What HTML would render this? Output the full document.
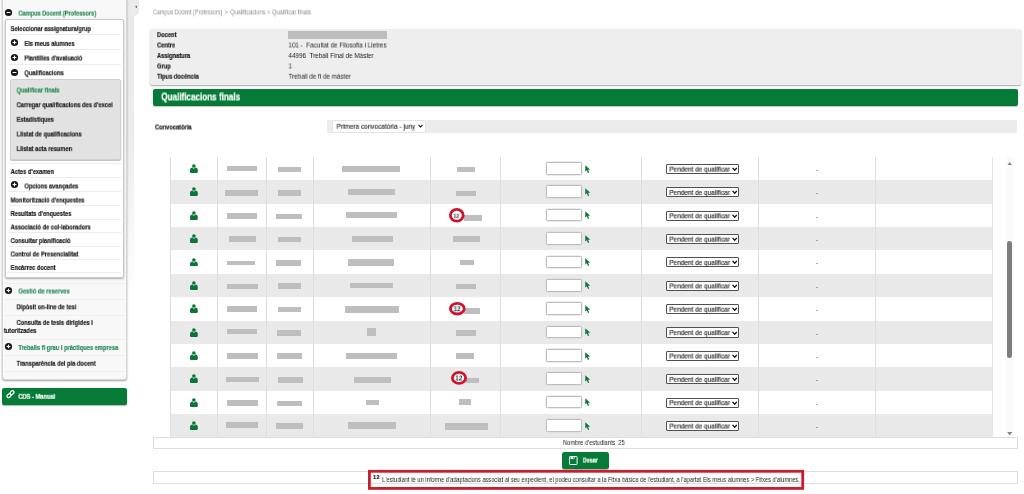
<!DOCTYPE html>
<html><head><meta charset="utf-8"><title>Qualificacions finals</title>
<style>
*{box-sizing:border-box;margin:0;padding:0}
html,body{width:1024px;height:494px;overflow:hidden;background:#fff}
body{font-family:"Liberation Sans",sans-serif;position:relative;color:#222}
.a{position:absolute}
.t{position:absolute;white-space:nowrap;transform-origin:0 50%;line-height:12px;height:12px;will-change:transform}
</style></head><body>
<div class="a" style="left:127px;top:0px;width:7.00px;height:300.00px;background:linear-gradient(to bottom,#e9e9e9 0,#ececec 45%,#fff 100%)"></div>
<div class="a" style="left:127px;top:-3px;width:12.30px;height:18.50px;background:#ebebeb;border-radius:0 0 5px 0"></div>
<svg class="a" style="left:134.5px;top:4.7px" width="2.6" height="3.6" viewBox="0 0 3 4.4"><path d="M3 0 L0 2.2 L3 4.4Z" fill="#5c5c5c"/></svg>
<div class="a" style="left:1.5px;top:-4px;width:125.50px;height:384.00px;background:#f8f8f8;border:1px solid #d6d6d6;border-radius:3px;box-shadow:0 1px 2px rgba(0,0,0,.38)"></div>
<div class="a" style="left:5.2px;top:19px;width:119.00px;height:258.80px;background:#fff;border:1px solid #c9c9c9;border-radius:2px;box-shadow:0 1px 2px rgba(0,0,0,.3)"></div>
<svg class="a" style="left:4px;top:8px" width="9" height="9" viewBox="0 0 9 9"><circle cx="4.5" cy="4.5" r="3.6" fill="#161616"/><rect x="2.6" y="3.95" width="3.8" height="1.1" fill="#fff"/></svg>
<div class="t" style="left:18px;top:7px;font-size:7px;font-weight:bold;color:#2b8c58;transform:translate(0.40px,0.60px) scaleX(0.805);-webkit-text-stroke:.22px currentColor;">Campus Docent (Professors)</div>
<div class="t" style="left:10px;top:23px;font-size:7px;font-weight:bold;color:#222;transform:translate(0.60px,0.10px) scaleX(0.82);-webkit-text-stroke:.22px currentColor;">Seleccionar assignatura/grup</div>
<svg class="a" style="left:10px;top:38px" width="9" height="9" viewBox="0 0 9 9"><circle cx="4.5" cy="4.5" r="3.6" fill="#161616"/><rect x="2.6" y="3.95" width="3.8" height="1.1" fill="#fff"/><rect x="3.95" y="2.6" width="1.1" height="3.8" fill="#fff"/></svg>
<div class="t" style="left:24px;top:37px;font-size:7px;font-weight:bold;color:#222;transform:translate(0.40px,0.90px) scaleX(0.82);-webkit-text-stroke:.22px currentColor;">Els meus alumnes</div>
<svg class="a" style="left:10px;top:53px" width="9" height="9" viewBox="0 0 9 9"><circle cx="4.5" cy="4.5" r="3.6" fill="#161616"/><rect x="2.6" y="3.95" width="3.8" height="1.1" fill="#fff"/><rect x="3.95" y="2.6" width="1.1" height="3.8" fill="#fff"/></svg>
<div class="t" style="left:24px;top:52px;font-size:7px;font-weight:bold;color:#222;transform:translate(0.40px,0.50px) scaleX(0.82);-webkit-text-stroke:.22px currentColor;">Plantilles d&#39;avaluació</div>
<svg class="a" style="left:10px;top:68px" width="9" height="9" viewBox="0 0 9 9"><circle cx="4.5" cy="4.5" r="3.6" fill="#161616"/><rect x="2.6" y="3.95" width="3.8" height="1.1" fill="#fff"/></svg>
<div class="t" style="left:24px;top:67px;font-size:7px;font-weight:bold;color:#222;transform:translate(0.40px,0.20px) scaleX(0.82);-webkit-text-stroke:.22px currentColor;">Qualificacions</div>
<div class="a" style="left:9px;top:33.9px;width:112.00px;height:1.00px;background:#ececec"></div>
<div class="a" style="left:9px;top:48.8px;width:112.00px;height:1.00px;background:#ececec"></div>
<div class="a" style="left:9px;top:63.5px;width:112.00px;height:1.00px;background:#ececec"></div>
<div class="a" style="left:10px;top:79px;width:110.50px;height:80.50px;background:#e2e2e2;border:1px solid #cfcfcf;border-radius:2px;box-shadow:0 1px 1px rgba(0,0,0,.25)"></div>
<div class="t" style="left:16px;top:84px;font-size:7px;font-weight:bold;color:#2b8c58;transform:translate(0.60px,0.50px) scaleX(0.82);-webkit-text-stroke:.22px currentColor;">Qualificar finals</div>
<div class="t" style="left:16px;top:99px;font-size:7px;font-weight:bold;color:#222;transform:translate(0.60px,0.20px) scaleX(0.82);-webkit-text-stroke:.22px currentColor;">Carregar qualificacions des d&#39;excel</div>
<div class="t" style="left:16px;top:113px;font-size:7px;font-weight:bold;color:#222;transform:translate(0.60px,0.80px) scaleX(0.82);-webkit-text-stroke:.22px currentColor;">Estadístiques</div>
<div class="t" style="left:16px;top:128px;font-size:7px;font-weight:bold;color:#222;transform:translate(0.60px,0.50px) scaleX(0.82);-webkit-text-stroke:.22px currentColor;">Llistat de qualificacions</div>
<div class="t" style="left:16px;top:143px;font-size:7px;font-weight:bold;color:#222;transform:translate(0.60px,0.10px) scaleX(0.82);-webkit-text-stroke:.22px currentColor;">Llistat acta resumen</div>
<div class="t" style="left:10px;top:166px;font-size:7px;font-weight:bold;color:#222;transform:translate(0.60px,0.00px) scaleX(0.82);-webkit-text-stroke:.22px currentColor;">Actes d&#39;examen</div>
<div class="t" style="left:10px;top:194px;font-size:7px;font-weight:bold;color:#222;transform:translate(0.60px,0.50px) scaleX(0.82);-webkit-text-stroke:.22px currentColor;">Monitorització d&#39;enquestes</div>
<div class="t" style="left:10px;top:208px;font-size:7px;font-weight:bold;color:#222;transform:translate(0.60px,0.00px) scaleX(0.82);-webkit-text-stroke:.22px currentColor;">Resultats d&#39;enquestes</div>
<div class="t" style="left:10px;top:221px;font-size:7px;font-weight:bold;color:#222;transform:translate(0.60px,0.50px) scaleX(0.82);-webkit-text-stroke:.22px currentColor;">Associació de col·laboradors</div>
<div class="t" style="left:10px;top:235px;font-size:7px;font-weight:bold;color:#222;transform:translate(0.60px,0.10px) scaleX(0.82);-webkit-text-stroke:.22px currentColor;">Consultar planificació</div>
<div class="t" style="left:10px;top:248px;font-size:7px;font-weight:bold;color:#222;transform:translate(0.60px,0.50px) scaleX(0.82);-webkit-text-stroke:.22px currentColor;">Control de Presencialitat</div>
<div class="t" style="left:10px;top:262px;font-size:7px;font-weight:bold;color:#222;transform:translate(0.60px,0.00px) scaleX(0.82);-webkit-text-stroke:.22px currentColor;">Encàrrec docent</div>
<svg class="a" style="left:10px;top:180px" width="9" height="9" viewBox="0 0 9 9"><circle cx="4.5" cy="4.5" r="3.6" fill="#161616"/><rect x="2.6" y="3.95" width="3.8" height="1.1" fill="#fff"/><rect x="3.95" y="2.6" width="1.1" height="3.8" fill="#fff"/></svg>
<div class="t" style="left:24px;top:180px;font-size:7px;font-weight:bold;color:#222;transform:translate(0.40px,0.50px) scaleX(0.82);-webkit-text-stroke:.22px currentColor;">Opcions avançades</div>
<div class="a" style="left:9px;top:163.2px;width:112.00px;height:1.00px;background:#ececec"></div>
<div class="a" style="left:9px;top:176.9px;width:112.00px;height:1.00px;background:#ececec"></div>
<div class="a" style="left:9px;top:191.3px;width:112.00px;height:1.00px;background:#ececec"></div>
<div class="a" style="left:9px;top:205.3px;width:112.00px;height:1.00px;background:#ececec"></div>
<div class="a" style="left:9px;top:218.5px;width:112.00px;height:1.00px;background:#ececec"></div>
<div class="a" style="left:9px;top:232.1px;width:112.00px;height:1.00px;background:#ececec"></div>
<div class="a" style="left:9px;top:245.8px;width:112.00px;height:1.00px;background:#ececec"></div>
<div class="a" style="left:9px;top:259.2px;width:112.00px;height:1.00px;background:#ececec"></div>
<div class="a" style="left:9px;top:272.4px;width:112.00px;height:1.00px;background:#ececec"></div>
<svg class="a" style="left:4px;top:286px" width="9" height="9" viewBox="0 0 9 9"><circle cx="4.5" cy="4.5" r="3.6" fill="#161616"/><rect x="2.6" y="3.95" width="3.8" height="1.1" fill="#fff"/><rect x="3.95" y="2.6" width="1.1" height="3.8" fill="#fff"/></svg>
<div class="t" style="left:18px;top:285px;font-size:7px;font-weight:bold;color:#2b8c58;transform:translate(0.40px,0.50px) scaleX(0.82);-webkit-text-stroke:.22px currentColor;">Gestió de reserves</div>
<div class="t" style="left:16px;top:301px;font-size:7px;font-weight:bold;color:#222;transform:translate(0.60px,0.30px) scaleX(0.82);-webkit-text-stroke:.22px currentColor;">Dipòsit on-line de tesi</div>
<div class="t" style="left:16px;top:316px;font-size:7px;font-weight:bold;color:#222;transform:translate(0.60px,0.90px) scaleX(0.82);-webkit-text-stroke:.22px currentColor;">Consulta de tesis dirigides i</div>
<div class="t" style="left:3px;top:325px;font-size:7px;font-weight:bold;color:#222;transform:translate(0.80px,0.00px) scaleX(0.82);-webkit-text-stroke:.22px currentColor;">tutoritzades</div>
<svg class="a" style="left:4px;top:342px" width="9" height="9" viewBox="0 0 9 9"><circle cx="4.5" cy="4.5" r="3.6" fill="#161616"/><rect x="2.6" y="3.95" width="3.8" height="1.1" fill="#fff"/><rect x="3.95" y="2.6" width="1.1" height="3.8" fill="#fff"/></svg>
<div class="t" style="left:18px;top:342px;font-size:7px;font-weight:bold;color:#2b8c58;transform:translate(0.40px,0.00px) scaleX(0.82);-webkit-text-stroke:.22px currentColor;">Treballs fi grau i pràctiques empresa</div>
<div class="t" style="left:16px;top:357px;font-size:7px;font-weight:bold;color:#222;transform:translate(0.60px,0.80px) scaleX(0.82);-webkit-text-stroke:.22px currentColor;">Transparència del pla docent</div>
<div class="a" style="left:4px;top:283px;width:121.00px;height:1.00px;background:#efefef"></div>
<div class="a" style="left:4px;top:299px;width:121.00px;height:1.00px;background:#efefef"></div>
<div class="a" style="left:4px;top:314.5px;width:121.00px;height:1.00px;background:#efefef"></div>
<div class="a" style="left:4px;top:339px;width:121.00px;height:1.00px;background:#efefef"></div>
<div class="a" style="left:4px;top:355px;width:121.00px;height:1.00px;background:#efefef"></div>
<div class="a" style="left:4px;top:371px;width:121.00px;height:1.00px;background:#efefef"></div>
<div class="a" style="left:2px;top:387.6px;width:125.00px;height:17.20px;background:#067b37;border-radius:2px;box-shadow:0 1px 1px rgba(0,0,0,.3)"></div>
<svg class="a" style="left:5.5px;top:390px" width="9" height="9" viewBox="0 0 9 9" fill="none" stroke="#fff" stroke-width="1.2"><rect x="0.8" y="4.2" width="4.4" height="3" rx="1.5" transform="rotate(-45 3 5.7)"/><rect x="3.8" y="1.2" width="4.4" height="3" rx="1.5" transform="rotate(-45 6 2.7)"/></svg>
<div class="t" style="left:18px;top:390px;font-size:7px;font-weight:bold;color:#fff;transform:translate(0.30px,0.80px) scaleX(0.82);-webkit-text-stroke:.22px currentColor;">CDS - Manual</div>
<div class="t" style="left:153px;top:6px;font-size:6.8px;font-weight:normal;color:#8c8c8c;transform:translate(0.00px,0.40px) scaleX(0.792);">Campus Docent (Professors)</div>
<div class="t" style="left:224px;top:6px;font-size:6.8px;font-weight:normal;color:#8c8c8c;transform:translate(0.70px,0.40px) scaleX(0.8);">&gt;</div>
<div class="t" style="left:230px;top:6px;font-size:6.8px;font-weight:normal;color:#8c8c8c;transform:translate(0.20px,0.40px) scaleX(0.832);">Qualificacions</div>
<div class="t" style="left:266px;top:6px;font-size:6.8px;font-weight:normal;color:#8c8c8c;transform:translate(0.90px,0.40px) scaleX(0.8);">&gt;</div>
<div class="t" style="left:271px;top:6px;font-size:6.8px;font-weight:normal;color:#8c8c8c;transform:translate(0.90px,0.40px) scaleX(0.844);">Qualificar finals</div>
<div class="a" style="left:149.5px;top:28.5px;width:871.50px;height:56.50px;background:#eee;border-radius:2px;box-shadow:0 1px 1.5px rgba(0,0,0,.35)"></div>
<div class="t" style="left:157px;top:29px;font-size:7px;font-weight:bold;color:#222;transform:translate(0.00px,0.10px) scaleX(0.82);-webkit-text-stroke:.22px currentColor;">Docent</div>
<div class="t" style="left:157px;top:39px;font-size:7px;font-weight:bold;color:#222;transform:translate(0.00px,0.50px) scaleX(0.82);-webkit-text-stroke:.22px currentColor;">Centre</div>
<div class="t" style="left:288px;top:39px;font-size:7px;font-weight:normal;color:#222;transform:translate(0.50px,0.50px) scaleX(0.9);">101 -&nbsp; Facultat de Filosofia i Lletres</div>
<div class="t" style="left:157px;top:50px;font-size:7px;font-weight:bold;color:#222;transform:translate(0.00px,0.00px) scaleX(0.82);-webkit-text-stroke:.22px currentColor;">Assignatura</div>
<div class="t" style="left:288px;top:50px;font-size:7px;font-weight:normal;color:#222;transform:translate(0.50px,0.00px) scaleX(0.9);">44996&nbsp; Treball Final de Màster</div>
<div class="t" style="left:157px;top:60px;font-size:7px;font-weight:bold;color:#222;transform:translate(0.00px,0.50px) scaleX(0.82);-webkit-text-stroke:.22px currentColor;">Grup</div>
<div class="t" style="left:288px;top:60px;font-size:7px;font-weight:normal;color:#222;transform:translate(0.50px,0.50px) scaleX(0.9);">1</div>
<div class="t" style="left:157px;top:70px;font-size:7px;font-weight:bold;color:#222;transform:translate(0.00px,0.70px) scaleX(0.82);-webkit-text-stroke:.22px currentColor;">Tipus docència</div>
<div class="t" style="left:288px;top:70px;font-size:7px;font-weight:normal;color:#222;transform:translate(0.50px,0.70px) scaleX(0.9);">Treball de fi de màster</div>
<div class="a" style="left:288.2px;top:31px;width:98.60px;height:7.60px;background:#bdbdbd"></div>
<div class="a" style="left:153.3px;top:88.8px;width:864.70px;height:17.00px;background:#067b37;border-radius:2px;box-shadow:0 1px 1px rgba(0,0,0,.25)"></div>
<div class="t" style="left:161px;top:91px;font-size:10px;font-weight:bold;color:#fff;transform:translate(0.30px,0.50px) scaleX(0.81);-webkit-text-stroke:.22px currentColor;">Qualificacions finals</div>
<div class="t" style="left:155px;top:121px;font-size:7px;font-weight:bold;color:#222;transform:translate(0.00px,0.50px) scaleX(0.82);-webkit-text-stroke:.22px currentColor;">Convocatòria</div>
<div class="a" style="left:327.3px;top:119.6px;width:689.70px;height:13.00px;background:#ececec"></div>
<div class="a" style="left:332.2px;top:120.4px;width:93.60px;height:12.60px;background:#fff;border:1px solid #e4e4e4;border-radius:2px"></div>
<div class="t" style="left:336px;top:120px;font-size:7.4px;font-weight:normal;color:#1c1c1c;transform:translate(0.50px,0.80px) scaleX(0.874);-webkit-text-stroke:.12px currentColor;">Primera convocatòria - juny</div>
<svg class="a" style="left:418.3px;top:124.3px" width="5" height="4" viewBox="0 0 5 4" fill="none" stroke="#111" stroke-width="1.1"><path d="M0.5 0.8 L2.5 3 L4.5 0.8"/></svg>
<div class="a" style="left:170px;top:157.05px;width:822.50px;height:23.36px;background:#fff"></div>
<svg class="a" style="left:189.8px;top:164.13px" width="7.8" height="8.9" viewBox="0 0 7.8 8.9"><circle cx="3.9" cy="1.95" r="1.8" fill="#0a7537"/><path d="M0 8.1 V6.2 Q0 3.5 2.6 3.5 L3.9 4.9 L5.2 3.5 Q7.8 3.5 7.8 6.2 V8.1 Q7.8 8.9 7 8.9 H0.8 Q0 8.9 0 8.1Z" fill="#0a7537"/></svg>
<div class="a" style="left:226.5px;top:165.6px;width:30.50px;height:5.70px;background:#bebebe"></div>
<div class="a" style="left:278px;top:166.6px;width:22.50px;height:5.70px;background:#bebebe"></div>
<div class="a" style="left:342.4px;top:165.6px;width:57.50px;height:6.30px;background:#bebebe"></div>
<div class="a" style="left:457.4px;top:167.3px;width:17.60px;height:5.00px;background:#bebebe"></div>
<div class="a" style="left:546.2px;top:162.13000000000002px;width:35.80px;height:12.60px;background:#fff;border:1px solid #bdbdbd;border-radius:1.5px;box-shadow:0 0 0 .4px #dadada"></div>
<svg class="a" style="left:585.2px;top:164.63px" width="5.6" height="8.4" viewBox="0 0 6 9"><path d="M0.3 0.2 L0.3 7 L1.9 5.5 L3.2 8.6 L4.5 8 L3.2 5 L5.6 5Z" fill="#0b7439"/></svg>
<div class="a" style="left:665.9px;top:163.93px;width:73.10px;height:10.10px;background:#fff;border:1px solid #505050;border-radius:1px"></div>
<div class="t" style="left:669px;top:163px;font-size:7.3px;font-weight:normal;color:#1c1c1c;transform:translate(0.30px,0.58px) scaleX(0.883);-webkit-text-stroke:.15px currentColor;">Pendent de qualificar</div>
<svg class="a" style="left:731.8px;top:167.03px" width="5.4" height="4.3" viewBox="0 0 5 4" fill="none" stroke="#111" stroke-width="1.25"><path d="M0.5 0.8 L2.5 3 L4.5 0.8"/></svg>
<div class="t" style="left:816px;top:164px;font-size:7px;font-weight:normal;color:#555;transform:translate(0.00px,0.03px) scaleX(1);">-</div>
<div class="a" style="left:170px;top:180.41000000000003px;width:822.50px;height:23.36px;background:#e9e9e9"></div>
<svg class="a" style="left:189.8px;top:187.49px" width="7.8" height="8.9" viewBox="0 0 7.8 8.9"><circle cx="3.9" cy="1.95" r="1.8" fill="#0a7537"/><path d="M0 8.1 V6.2 Q0 3.5 2.6 3.5 L3.9 4.9 L5.2 3.5 Q7.8 3.5 7.8 6.2 V8.1 Q7.8 8.9 7 8.9 H0.8 Q0 8.9 0 8.1Z" fill="#0a7537"/></svg>
<div class="a" style="left:225.1px;top:189.5px;width:32.60px;height:6.00px;background:#bebebe"></div>
<div class="a" style="left:278px;top:190.2px;width:22.90px;height:6.00px;background:#bebebe"></div>
<div class="a" style="left:348px;top:189.2px;width:46.90px;height:6.30px;background:#bebebe"></div>
<div class="a" style="left:456.4px;top:190.5px;width:19.60px;height:5.70px;background:#bebebe"></div>
<div class="a" style="left:546.2px;top:185.49000000000004px;width:35.80px;height:12.60px;background:#fff;border:1px solid #bdbdbd;border-radius:1.5px;box-shadow:0 0 0 .4px #dadada"></div>
<svg class="a" style="left:585.2px;top:187.99px" width="5.6" height="8.4" viewBox="0 0 6 9"><path d="M0.3 0.2 L0.3 7 L1.9 5.5 L3.2 8.6 L4.5 8 L3.2 5 L5.6 5Z" fill="#0b7439"/></svg>
<div class="a" style="left:665.9px;top:187.29000000000002px;width:73.10px;height:10.10px;background:#fff;border:1px solid #505050;border-radius:1px"></div>
<div class="t" style="left:669px;top:186px;font-size:7.3px;font-weight:normal;color:#1c1c1c;transform:translate(0.30px,0.94px) scaleX(0.883);-webkit-text-stroke:.15px currentColor;">Pendent de qualificar</div>
<svg class="a" style="left:731.8px;top:190.39px" width="5.4" height="4.3" viewBox="0 0 5 4" fill="none" stroke="#111" stroke-width="1.25"><path d="M0.5 0.8 L2.5 3 L4.5 0.8"/></svg>
<div class="t" style="left:816px;top:187px;font-size:7px;font-weight:normal;color:#555;transform:translate(0.00px,0.39px) scaleX(1);">-</div>
<div class="a" style="left:170px;top:203.77px;width:822.50px;height:23.36px;background:#fff"></div>
<svg class="a" style="left:189.8px;top:210.85px" width="7.8" height="8.9" viewBox="0 0 7.8 8.9"><circle cx="3.9" cy="1.95" r="1.8" fill="#0a7537"/><path d="M0 8.1 V6.2 Q0 3.5 2.6 3.5 L3.9 4.9 L5.2 3.5 Q7.8 3.5 7.8 6.2 V8.1 Q7.8 8.9 7 8.9 H0.8 Q0 8.9 0 8.1Z" fill="#0a7537"/></svg>
<div class="a" style="left:226.8px;top:212.5px;width:30.20px;height:6.30px;background:#bebebe"></div>
<div class="a" style="left:276px;top:213.5px;width:25.50px;height:5.60px;background:#bebebe"></div>
<div class="a" style="left:346px;top:211.8px;width:50.50px;height:6.30px;background:#bebebe"></div>
<div class="a" style="left:464px;top:215.4px;width:17.60px;height:5.40px;background:#bebebe"></div>
<svg class="a" style="left:447.50px;top:206.90px" width="17.6" height="16.6" viewBox="0 0 17.6 16.6"><ellipse cx="8.8" cy="8.3" rx="6.40" ry="5.90" fill="#fff" stroke="#d0122b" stroke-width="2.8"/></svg>
<div class="t" style="left:453px;top:209px;font-size:5.3px;font-weight:bold;color:#1f2937;transform:translate(0.49px,0.80px) scaleX(0.95);-webkit-text-stroke:0;">12</div>
<div class="a" style="left:546.2px;top:208.85px;width:35.80px;height:12.60px;background:#fff;border:1px solid #bdbdbd;border-radius:1.5px;box-shadow:0 0 0 .4px #dadada"></div>
<svg class="a" style="left:585.2px;top:211.35px" width="5.6" height="8.4" viewBox="0 0 6 9"><path d="M0.3 0.2 L0.3 7 L1.9 5.5 L3.2 8.6 L4.5 8 L3.2 5 L5.6 5Z" fill="#0b7439"/></svg>
<div class="a" style="left:665.9px;top:210.64999999999998px;width:73.10px;height:10.10px;background:#fff;border:1px solid #505050;border-radius:1px"></div>
<div class="t" style="left:669px;top:210px;font-size:7.3px;font-weight:normal;color:#1c1c1c;transform:translate(0.30px,0.30px) scaleX(0.883);-webkit-text-stroke:.15px currentColor;">Pendent de qualificar</div>
<svg class="a" style="left:731.8px;top:213.75px" width="5.4" height="4.3" viewBox="0 0 5 4" fill="none" stroke="#111" stroke-width="1.25"><path d="M0.5 0.8 L2.5 3 L4.5 0.8"/></svg>
<div class="t" style="left:816px;top:210px;font-size:7px;font-weight:normal;color:#555;transform:translate(0.00px,0.75px) scaleX(1);">-</div>
<div class="a" style="left:170px;top:227.13px;width:822.50px;height:23.36px;background:#e9e9e9"></div>
<svg class="a" style="left:189.8px;top:234.21px" width="7.8" height="8.9" viewBox="0 0 7.8 8.9"><circle cx="3.9" cy="1.95" r="1.8" fill="#0a7537"/><path d="M0 8.1 V6.2 Q0 3.5 2.6 3.5 L3.9 4.9 L5.2 3.5 Q7.8 3.5 7.8 6.2 V8.1 Q7.8 8.9 7 8.9 H0.8 Q0 8.9 0 8.1Z" fill="#0a7537"/></svg>
<div class="a" style="left:228.5px;top:236.4px;width:27.20px;height:5.30px;background:#bebebe"></div>
<div class="a" style="left:277.6px;top:236.7px;width:23.90px;height:5.30px;background:#bebebe"></div>
<div class="a" style="left:352px;top:236px;width:40.90px;height:6.00px;background:#bebebe"></div>
<div class="a" style="left:452.7px;top:236.4px;width:27.30px;height:5.60px;background:#bebebe"></div>
<div class="a" style="left:546.2px;top:232.21px;width:35.80px;height:12.60px;background:#fff;border:1px solid #bdbdbd;border-radius:1.5px;box-shadow:0 0 0 .4px #dadada"></div>
<svg class="a" style="left:585.2px;top:234.71px" width="5.6" height="8.4" viewBox="0 0 6 9"><path d="M0.3 0.2 L0.3 7 L1.9 5.5 L3.2 8.6 L4.5 8 L3.2 5 L5.6 5Z" fill="#0b7439"/></svg>
<div class="a" style="left:665.9px;top:234.01px;width:73.10px;height:10.10px;background:#fff;border:1px solid #505050;border-radius:1px"></div>
<div class="t" style="left:669px;top:233px;font-size:7.3px;font-weight:normal;color:#1c1c1c;transform:translate(0.30px,0.66px) scaleX(0.883);-webkit-text-stroke:.15px currentColor;">Pendent de qualificar</div>
<svg class="a" style="left:731.8px;top:237.11px" width="5.4" height="4.3" viewBox="0 0 5 4" fill="none" stroke="#111" stroke-width="1.25"><path d="M0.5 0.8 L2.5 3 L4.5 0.8"/></svg>
<div class="t" style="left:816px;top:234px;font-size:7px;font-weight:normal;color:#555;transform:translate(0.00px,0.11px) scaleX(1);">-</div>
<div class="a" style="left:170px;top:250.49px;width:822.50px;height:23.36px;background:#fff"></div>
<svg class="a" style="left:189.8px;top:257.57px" width="7.8" height="8.9" viewBox="0 0 7.8 8.9"><circle cx="3.9" cy="1.95" r="1.8" fill="#0a7537"/><path d="M0 8.1 V6.2 Q0 3.5 2.6 3.5 L3.9 4.9 L5.2 3.5 Q7.8 3.5 7.8 6.2 V8.1 Q7.8 8.9 7 8.9 H0.8 Q0 8.9 0 8.1Z" fill="#0a7537"/></svg>
<div class="a" style="left:226.5px;top:260.6px;width:28.90px;height:4.70px;background:#bebebe"></div>
<div class="a" style="left:275.6px;top:260px;width:25.90px;height:5.60px;background:#bebebe"></div>
<div class="a" style="left:348.4px;top:259px;width:45.80px;height:6.60px;background:#bebebe"></div>
<div class="a" style="left:459.7px;top:259.6px;width:14.30px;height:5.40px;background:#bebebe"></div>
<div class="a" style="left:546.2px;top:255.57000000000002px;width:35.80px;height:12.60px;background:#fff;border:1px solid #bdbdbd;border-radius:1.5px;box-shadow:0 0 0 .4px #dadada"></div>
<svg class="a" style="left:585.2px;top:258.07px" width="5.6" height="8.4" viewBox="0 0 6 9"><path d="M0.3 0.2 L0.3 7 L1.9 5.5 L3.2 8.6 L4.5 8 L3.2 5 L5.6 5Z" fill="#0b7439"/></svg>
<div class="a" style="left:665.9px;top:257.37px;width:73.10px;height:10.10px;background:#fff;border:1px solid #505050;border-radius:1px"></div>
<div class="t" style="left:669px;top:257px;font-size:7.3px;font-weight:normal;color:#1c1c1c;transform:translate(0.30px,0.02px) scaleX(0.883);-webkit-text-stroke:.15px currentColor;">Pendent de qualificar</div>
<svg class="a" style="left:731.8px;top:260.47px" width="5.4" height="4.3" viewBox="0 0 5 4" fill="none" stroke="#111" stroke-width="1.25"><path d="M0.5 0.8 L2.5 3 L4.5 0.8"/></svg>
<div class="t" style="left:816px;top:257px;font-size:7px;font-weight:normal;color:#555;transform:translate(0.00px,0.47px) scaleX(1);">-</div>
<div class="a" style="left:170px;top:273.85px;width:822.50px;height:23.36px;background:#e9e9e9"></div>
<svg class="a" style="left:189.8px;top:280.93px" width="7.8" height="8.9" viewBox="0 0 7.8 8.9"><circle cx="3.9" cy="1.95" r="1.8" fill="#0a7537"/><path d="M0 8.1 V6.2 Q0 3.5 2.6 3.5 L3.9 4.9 L5.2 3.5 Q7.8 3.5 7.8 6.2 V8.1 Q7.8 8.9 7 8.9 H0.8 Q0 8.9 0 8.1Z" fill="#0a7537"/></svg>
<div class="a" style="left:226.5px;top:283.6px;width:31.90px;height:5.90px;background:#bebebe"></div>
<div class="a" style="left:278px;top:283px;width:22.50px;height:5.60px;background:#bebebe"></div>
<div class="a" style="left:350px;top:282.6px;width:42.60px;height:5.90px;background:#bebebe"></div>
<div class="a" style="left:456.4px;top:283.6px;width:19.20px;height:5.90px;background:#bebebe"></div>
<div class="a" style="left:546.2px;top:278.93px;width:35.80px;height:12.60px;background:#fff;border:1px solid #bdbdbd;border-radius:1.5px;box-shadow:0 0 0 .4px #dadada"></div>
<svg class="a" style="left:585.2px;top:281.43px" width="5.6" height="8.4" viewBox="0 0 6 9"><path d="M0.3 0.2 L0.3 7 L1.9 5.5 L3.2 8.6 L4.5 8 L3.2 5 L5.6 5Z" fill="#0b7439"/></svg>
<div class="a" style="left:665.9px;top:280.73px;width:73.10px;height:10.10px;background:#fff;border:1px solid #505050;border-radius:1px"></div>
<div class="t" style="left:669px;top:280px;font-size:7.3px;font-weight:normal;color:#1c1c1c;transform:translate(0.30px,0.38px) scaleX(0.883);-webkit-text-stroke:.15px currentColor;">Pendent de qualificar</div>
<svg class="a" style="left:731.8px;top:283.83px" width="5.4" height="4.3" viewBox="0 0 5 4" fill="none" stroke="#111" stroke-width="1.25"><path d="M0.5 0.8 L2.5 3 L4.5 0.8"/></svg>
<div class="t" style="left:816px;top:280px;font-size:7px;font-weight:normal;color:#555;transform:translate(0.00px,0.83px) scaleX(1);">-</div>
<div class="a" style="left:170px;top:297.21000000000004px;width:822.50px;height:23.36px;background:#fff"></div>
<svg class="a" style="left:189.8px;top:304.29px" width="7.8" height="8.9" viewBox="0 0 7.8 8.9"><circle cx="3.9" cy="1.95" r="1.8" fill="#0a7537"/><path d="M0 8.1 V6.2 Q0 3.5 2.6 3.5 L3.9 4.9 L5.2 3.5 Q7.8 3.5 7.8 6.2 V8.1 Q7.8 8.9 7 8.9 H0.8 Q0 8.9 0 8.1Z" fill="#0a7537"/></svg>
<div class="a" style="left:226.8px;top:306.1px;width:30.20px;height:5.70px;background:#bebebe"></div>
<div class="a" style="left:278.3px;top:306.8px;width:23.20px;height:5.30px;background:#bebebe"></div>
<div class="a" style="left:345.4px;top:306.1px;width:53.50px;height:6.70px;background:#bebebe"></div>
<div class="a" style="left:464px;top:308.2px;width:15.50px;height:6.20px;background:#bebebe"></div>
<svg class="a" style="left:447.80px;top:300.90px" width="18.6" height="15.4" viewBox="0 0 18.6 15.4"><ellipse cx="9.3" cy="7.7" rx="6.90" ry="5.30" fill="#fff" stroke="#d0122b" stroke-width="2.8"/></svg>
<div class="t" style="left:453px;top:303px;font-size:6.6px;font-weight:bold;color:#1f2937;transform:translate(0.60px,0.20px) scaleX(0.95);-webkit-text-stroke:0;">12</div>
<div class="a" style="left:546.2px;top:302.29px;width:35.80px;height:12.60px;background:#fff;border:1px solid #bdbdbd;border-radius:1.5px;box-shadow:0 0 0 .4px #dadada"></div>
<svg class="a" style="left:585.2px;top:304.79px" width="5.6" height="8.4" viewBox="0 0 6 9"><path d="M0.3 0.2 L0.3 7 L1.9 5.5 L3.2 8.6 L4.5 8 L3.2 5 L5.6 5Z" fill="#0b7439"/></svg>
<div class="a" style="left:665.9px;top:304.09000000000003px;width:73.10px;height:10.10px;background:#fff;border:1px solid #505050;border-radius:1px"></div>
<div class="t" style="left:669px;top:303px;font-size:7.3px;font-weight:normal;color:#1c1c1c;transform:translate(0.30px,0.74px) scaleX(0.883);-webkit-text-stroke:.15px currentColor;">Pendent de qualificar</div>
<svg class="a" style="left:731.8px;top:307.19px" width="5.4" height="4.3" viewBox="0 0 5 4" fill="none" stroke="#111" stroke-width="1.25"><path d="M0.5 0.8 L2.5 3 L4.5 0.8"/></svg>
<div class="t" style="left:816px;top:304px;font-size:7px;font-weight:normal;color:#555;transform:translate(0.00px,0.19px) scaleX(1);">-</div>
<div class="a" style="left:170px;top:320.57px;width:822.50px;height:23.36px;background:#e9e9e9"></div>
<svg class="a" style="left:189.8px;top:327.65px" width="7.8" height="8.9" viewBox="0 0 7.8 8.9"><circle cx="3.9" cy="1.95" r="1.8" fill="#0a7537"/><path d="M0 8.1 V6.2 Q0 3.5 2.6 3.5 L3.9 4.9 L5.2 3.5 Q7.8 3.5 7.8 6.2 V8.1 Q7.8 8.9 7 8.9 H0.8 Q0 8.9 0 8.1Z" fill="#0a7537"/></svg>
<div class="a" style="left:227px;top:328.7px;width:29.70px;height:5.70px;background:#bebebe"></div>
<div class="a" style="left:277px;top:330px;width:23.50px;height:6.40px;background:#bebebe"></div>
<div class="a" style="left:367px;top:328.4px;width:9.30px;height:7.30px;background:#bebebe"></div>
<div class="a" style="left:455.7px;top:329.7px;width:20.60px;height:6.00px;background:#bebebe"></div>
<div class="a" style="left:546.2px;top:325.65px;width:35.80px;height:12.60px;background:#fff;border:1px solid #bdbdbd;border-radius:1.5px;box-shadow:0 0 0 .4px #dadada"></div>
<svg class="a" style="left:585.2px;top:328.15px" width="5.6" height="8.4" viewBox="0 0 6 9"><path d="M0.3 0.2 L0.3 7 L1.9 5.5 L3.2 8.6 L4.5 8 L3.2 5 L5.6 5Z" fill="#0b7439"/></svg>
<div class="a" style="left:665.9px;top:327.45px;width:73.10px;height:10.10px;background:#fff;border:1px solid #505050;border-radius:1px"></div>
<div class="t" style="left:669px;top:327px;font-size:7.3px;font-weight:normal;color:#1c1c1c;transform:translate(0.30px,0.10px) scaleX(0.883);-webkit-text-stroke:.15px currentColor;">Pendent de qualificar</div>
<svg class="a" style="left:731.8px;top:330.55px" width="5.4" height="4.3" viewBox="0 0 5 4" fill="none" stroke="#111" stroke-width="1.25"><path d="M0.5 0.8 L2.5 3 L4.5 0.8"/></svg>
<div class="t" style="left:816px;top:327px;font-size:7px;font-weight:normal;color:#555;transform:translate(0.00px,0.55px) scaleX(1);">-</div>
<div class="a" style="left:170px;top:343.93px;width:822.50px;height:23.36px;background:#fff"></div>
<svg class="a" style="left:189.8px;top:351.01px" width="7.8" height="8.9" viewBox="0 0 7.8 8.9"><circle cx="3.9" cy="1.95" r="1.8" fill="#0a7537"/><path d="M0 8.1 V6.2 Q0 3.5 2.6 3.5 L3.9 4.9 L5.2 3.5 Q7.8 3.5 7.8 6.2 V8.1 Q7.8 8.9 7 8.9 H0.8 Q0 8.9 0 8.1Z" fill="#0a7537"/></svg>
<div class="a" style="left:227.1px;top:353.3px;width:31.30px;height:5.70px;background:#bebebe"></div>
<div class="a" style="left:277px;top:353.3px;width:25.20px;height:6.00px;background:#bebebe"></div>
<div class="a" style="left:346px;top:353.3px;width:51.20px;height:6.00px;background:#bebebe"></div>
<div class="a" style="left:456px;top:353.3px;width:18.30px;height:6.00px;background:#bebebe"></div>
<div class="a" style="left:546.2px;top:349.01px;width:35.80px;height:12.60px;background:#fff;border:1px solid #bdbdbd;border-radius:1.5px;box-shadow:0 0 0 .4px #dadada"></div>
<svg class="a" style="left:585.2px;top:351.51px" width="5.6" height="8.4" viewBox="0 0 6 9"><path d="M0.3 0.2 L0.3 7 L1.9 5.5 L3.2 8.6 L4.5 8 L3.2 5 L5.6 5Z" fill="#0b7439"/></svg>
<div class="a" style="left:665.9px;top:350.81px;width:73.10px;height:10.10px;background:#fff;border:1px solid #505050;border-radius:1px"></div>
<div class="t" style="left:669px;top:350px;font-size:7.3px;font-weight:normal;color:#1c1c1c;transform:translate(0.30px,0.46px) scaleX(0.883);-webkit-text-stroke:.15px currentColor;">Pendent de qualificar</div>
<svg class="a" style="left:731.8px;top:353.91px" width="5.4" height="4.3" viewBox="0 0 5 4" fill="none" stroke="#111" stroke-width="1.25"><path d="M0.5 0.8 L2.5 3 L4.5 0.8"/></svg>
<div class="t" style="left:816px;top:350px;font-size:7px;font-weight:normal;color:#555;transform:translate(0.00px,0.91px) scaleX(1);">-</div>
<div class="a" style="left:170px;top:367.29px;width:822.50px;height:23.36px;background:#e9e9e9"></div>
<svg class="a" style="left:189.8px;top:374.37px" width="7.8" height="8.9" viewBox="0 0 7.8 8.9"><circle cx="3.9" cy="1.95" r="1.8" fill="#0a7537"/><path d="M0 8.1 V6.2 Q0 3.5 2.6 3.5 L3.9 4.9 L5.2 3.5 Q7.8 3.5 7.8 6.2 V8.1 Q7.8 8.9 7 8.9 H0.8 Q0 8.9 0 8.1Z" fill="#0a7537"/></svg>
<div class="a" style="left:226.1px;top:376.5px;width:32.90px;height:5.70px;background:#bebebe"></div>
<div class="a" style="left:278px;top:376.5px;width:24.90px;height:6.00px;background:#bebebe"></div>
<div class="a" style="left:353.7px;top:376.5px;width:37.50px;height:6.70px;background:#bebebe"></div>
<div class="a" style="left:466px;top:377.6px;width:12.60px;height:5.40px;background:#bebebe"></div>
<svg class="a" style="left:449.80px;top:370.00px" width="18" height="15.8" viewBox="0 0 18 15.8"><ellipse cx="9.0" cy="7.9" rx="6.60" ry="5.50" fill="#fff" stroke="#d0122b" stroke-width="2.8"/></svg>
<div class="t" style="left:455px;top:372px;font-size:6.6px;font-weight:bold;color:#1f2937;transform:translate(0.30px,0.50px) scaleX(0.95);-webkit-text-stroke:0;">12</div>
<div class="a" style="left:546.2px;top:372.37px;width:35.80px;height:12.60px;background:#fff;border:1px solid #bdbdbd;border-radius:1.5px;box-shadow:0 0 0 .4px #dadada"></div>
<svg class="a" style="left:585.2px;top:374.87px" width="5.6" height="8.4" viewBox="0 0 6 9"><path d="M0.3 0.2 L0.3 7 L1.9 5.5 L3.2 8.6 L4.5 8 L3.2 5 L5.6 5Z" fill="#0b7439"/></svg>
<div class="a" style="left:665.9px;top:374.17px;width:73.10px;height:10.10px;background:#fff;border:1px solid #505050;border-radius:1px"></div>
<div class="t" style="left:669px;top:373px;font-size:7.3px;font-weight:normal;color:#1c1c1c;transform:translate(0.30px,0.82px) scaleX(0.883);-webkit-text-stroke:.15px currentColor;">Pendent de qualificar</div>
<svg class="a" style="left:731.8px;top:377.27px" width="5.4" height="4.3" viewBox="0 0 5 4" fill="none" stroke="#111" stroke-width="1.25"><path d="M0.5 0.8 L2.5 3 L4.5 0.8"/></svg>
<div class="t" style="left:816px;top:374px;font-size:7px;font-weight:normal;color:#555;transform:translate(0.00px,0.27px) scaleX(1);">-</div>
<div class="a" style="left:170px;top:390.65px;width:822.50px;height:23.36px;background:#fff"></div>
<svg class="a" style="left:189.8px;top:397.73px" width="7.8" height="8.9" viewBox="0 0 7.8 8.9"><circle cx="3.9" cy="1.95" r="1.8" fill="#0a7537"/><path d="M0 8.1 V6.2 Q0 3.5 2.6 3.5 L3.9 4.9 L5.2 3.5 Q7.8 3.5 7.8 6.2 V8.1 Q7.8 8.9 7 8.9 H0.8 Q0 8.9 0 8.1Z" fill="#0a7537"/></svg>
<div class="a" style="left:227.1px;top:399.8px;width:30.60px;height:6.00px;background:#bebebe"></div>
<div class="a" style="left:277px;top:400.5px;width:24.90px;height:5.60px;background:#bebebe"></div>
<div class="a" style="left:365.7px;top:399.8px;width:12.90px;height:5.30px;background:#bebebe"></div>
<div class="a" style="left:459.3px;top:398.8px;width:11.70px;height:6.30px;background:#bebebe"></div>
<div class="a" style="left:546.2px;top:395.72999999999996px;width:35.80px;height:12.60px;background:#fff;border:1px solid #bdbdbd;border-radius:1.5px;box-shadow:0 0 0 .4px #dadada"></div>
<svg class="a" style="left:585.2px;top:398.23px" width="5.6" height="8.4" viewBox="0 0 6 9"><path d="M0.3 0.2 L0.3 7 L1.9 5.5 L3.2 8.6 L4.5 8 L3.2 5 L5.6 5Z" fill="#0b7439"/></svg>
<div class="a" style="left:665.9px;top:397.53px;width:73.10px;height:10.10px;background:#fff;border:1px solid #505050;border-radius:1px"></div>
<div class="t" style="left:669px;top:397px;font-size:7.3px;font-weight:normal;color:#1c1c1c;transform:translate(0.30px,0.18px) scaleX(0.883);-webkit-text-stroke:.15px currentColor;">Pendent de qualificar</div>
<svg class="a" style="left:731.8px;top:400.63px" width="5.4" height="4.3" viewBox="0 0 5 4" fill="none" stroke="#111" stroke-width="1.25"><path d="M0.5 0.8 L2.5 3 L4.5 0.8"/></svg>
<div class="t" style="left:816px;top:397px;font-size:7px;font-weight:normal;color:#555;transform:translate(0.00px,0.63px) scaleX(1);">-</div>
<div class="a" style="left:170px;top:414.01px;width:822.50px;height:23.36px;background:#e9e9e9"></div>
<svg class="a" style="left:189.8px;top:421.09px" width="7.8" height="8.9" viewBox="0 0 7.8 8.9"><circle cx="3.9" cy="1.95" r="1.8" fill="#0a7537"/><path d="M0 8.1 V6.2 Q0 3.5 2.6 3.5 L3.9 4.9 L5.2 3.5 Q7.8 3.5 7.8 6.2 V8.1 Q7.8 8.9 7 8.9 H0.8 Q0 8.9 0 8.1Z" fill="#0a7537"/></svg>
<div class="a" style="left:226.1px;top:422px;width:31.60px;height:6.00px;background:#bebebe"></div>
<div class="a" style="left:276px;top:423px;width:26.90px;height:5.70px;background:#bebebe"></div>
<div class="a" style="left:347.7px;top:422.4px;width:48.50px;height:6.30px;background:#bebebe"></div>
<div class="a" style="left:444.7px;top:422.7px;width:43.60px;height:7.00px;background:#bebebe"></div>
<div class="a" style="left:546.2px;top:419.09px;width:35.80px;height:12.60px;background:#fff;border:1px solid #bdbdbd;border-radius:1.5px;box-shadow:0 0 0 .4px #dadada"></div>
<svg class="a" style="left:585.2px;top:421.59px" width="5.6" height="8.4" viewBox="0 0 6 9"><path d="M0.3 0.2 L0.3 7 L1.9 5.5 L3.2 8.6 L4.5 8 L3.2 5 L5.6 5Z" fill="#0b7439"/></svg>
<div class="a" style="left:665.9px;top:420.89px;width:73.10px;height:10.10px;background:#fff;border:1px solid #505050;border-radius:1px"></div>
<div class="t" style="left:669px;top:420px;font-size:7.3px;font-weight:normal;color:#1c1c1c;transform:translate(0.30px,0.54px) scaleX(0.883);-webkit-text-stroke:.15px currentColor;">Pendent de qualificar</div>
<svg class="a" style="left:731.8px;top:423.99px" width="5.4" height="4.3" viewBox="0 0 5 4" fill="none" stroke="#111" stroke-width="1.25"><path d="M0.5 0.8 L2.5 3 L4.5 0.8"/></svg>
<div class="t" style="left:816px;top:420px;font-size:7px;font-weight:normal;color:#555;transform:translate(0.00px,0.99px) scaleX(1);">-</div>
<div class="a" style="left:169.5px;top:157.45000000000002px;width:1.00px;height:279.92px;background:#dedede"></div>
<div class="a" style="left:216.7px;top:157.45000000000002px;width:1.00px;height:279.92px;background:#dedede"></div>
<div class="a" style="left:265.8px;top:157.45000000000002px;width:1.00px;height:279.92px;background:#dedede"></div>
<div class="a" style="left:313.0px;top:157.45000000000002px;width:1.00px;height:279.92px;background:#dedede"></div>
<div class="a" style="left:429.9px;top:157.45000000000002px;width:1.00px;height:279.92px;background:#dedede"></div>
<div class="a" style="left:500.0px;top:157.45000000000002px;width:1.00px;height:279.92px;background:#dedede"></div>
<div class="a" style="left:640.9px;top:157.45000000000002px;width:1.00px;height:279.92px;background:#dedede"></div>
<div class="a" style="left:757.7px;top:157.45000000000002px;width:1.00px;height:279.92px;background:#dedede"></div>
<div class="a" style="left:875.1px;top:157.45000000000002px;width:1.00px;height:279.92px;background:#dedede"></div>
<div class="a" style="left:992.0px;top:157.45000000000002px;width:1.00px;height:279.92px;background:#e6e6e6"></div>
<div class="a" style="left:1005.5px;top:157px;width:8.00px;height:281.00px;background:#fbfbfb"></div>
<svg class="a" style="left:1007px;top:161.6px" width="5.4" height="3.4" viewBox="0 0 6 4"><path d="M3 0 L6 4 L0 4Z" fill="#858585"/></svg>
<svg class="a" style="left:1007px;top:431.8px" width="5.4" height="3.4" viewBox="0 0 6 4"><path d="M3 4 L6 0 L0 0Z" fill="#858585"/></svg>
<div class="a" style="left:1007.4px;top:240.5px;width:4.60px;height:117.50px;background:#7d7d7d;border-radius:2.3px"></div>
<div class="a" style="left:153.3px;top:437px;width:864.70px;height:12.30px;background:#fff;border:1px solid #dedede"></div>
<div class="t" style="left:563px;top:436px;font-size:6.6px;font-weight:normal;color:#222;transform:translate(0.00px,0.90px) scaleX(0.866);">Nombre d&#39;estudiants&nbsp; 25</div>
<div class="a" style="left:562px;top:452px;width:47.00px;height:16.50px;background:#067b37;border-radius:2.5px;box-shadow:0 1px 1px rgba(0,0,0,.3)"></div>
<svg class="a" style="left:569px;top:455.8px" width="8.6" height="9" viewBox="0 0 8.6 9"><rect x="0.5" y="0.5" width="7.6" height="8" rx="0.7" fill="none" stroke="#fff" stroke-width="1"/><rect x="1.6" y="0.8" width="3.9" height="2.3" fill="#fff"/><rect x="3.9" y="1.1" width="0.9" height="1.5" fill="#067b37"/></svg>
<div class="t" style="left:582px;top:454px;font-size:6.8px;font-weight:bold;color:#fff;transform:translate(0.80px,0.60px) scaleX(0.795);-webkit-text-stroke:.22px currentColor;">Desar</div>
<div class="a" style="left:153.3px;top:471.4px;width:864.70px;height:12.60px;background:#fff;border:1px solid #dedede"></div>
<div class="t" style="left:373px;top:471px;font-size:5.6px;font-weight:bold;color:#1a1a1a;transform:translate(0.00px,0.20px) scaleX(1);letter-spacing:.5px;-webkit-text-stroke:.15px currentColor;">12</div>
<div class="t" style="left:382px;top:474px;font-size:6.6px;font-weight:normal;color:#222;transform:translate(0.20px,0.00px) scaleX(0.862);">L&#39;estudiant té un informe d&#39;adaptacions associat al seu expedient, el podeu consultar a la Fitxa bàsica de l&#39;estudiant, a l&#39;apartat Els meus alumnes &gt; Fitxes d&#39;alumnes.</div>
<svg class="a" style="left:366px;top:468px" width="440" height="24" viewBox="0 0 440 24"><rect x="3.4" y="3.3" width="433.3" height="17.1" fill="none" stroke="#cb1c2e" stroke-width="2.8"/></svg>
</body></html>
